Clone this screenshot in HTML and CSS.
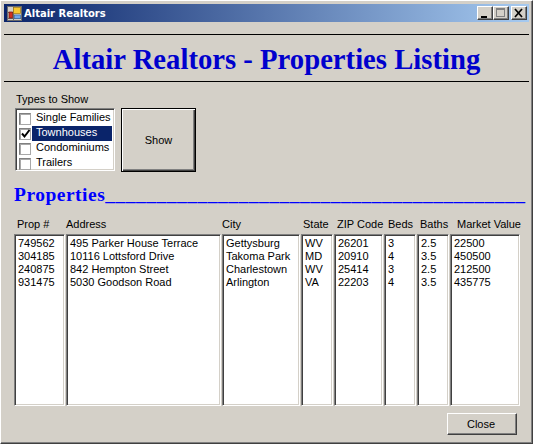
FILE: index.html
```html
<!DOCTYPE html>
<html lang="en">
<head>
<meta charset="utf-8">
<title>Altair Realtors</title>
<link rel="stylesheet" href="styles.css">
</head>
<body>
<div class="window">
  <div class="titlebar">
    <svg class="app-icon" width="15" height="15" viewBox="0 0 15 15">
      <rect x="0.5" y="0.5" width="14" height="14" fill="#d4d0c8" stroke="#6b6b6b"/>
      <path d="M1 6.5H6M6.5 1V14M1 12.5H14" stroke="#6b6b6b" fill="none"/>
      <rect x="6.5" y="1.5" width="7" height="6" fill="#f8c830" stroke="#a07810" stroke-width="0.7"/>
      <rect x="2" y="6" width="3.5" height="6" fill="#d03020" stroke="#701810" stroke-width="0.7"/>
      <rect x="7.5" y="9" width="6" height="3.5" fill="#70a8e8" stroke="#3868a8" stroke-width="0.7"/>
    </svg>
    <span class="title-text">Altair Realtors</span>
    <div class="caption-buttons">
      <div class="cap-btn cap-min"><svg width="15" height="14" viewBox="0 0 15 14"><rect x="4" y="10" width="6" height="2" fill="#000"/></svg></div>
      <div class="cap-btn cap-max"><svg width="15" height="14" viewBox="0 0 15 14"><rect x="3.5" y="2.5" width="8" height="8" fill="none" stroke="#808080"/><rect x="3" y="2" width="9" height="2" fill="#808080"/></svg></div>
      <div class="cap-btn cap-close"><svg width="15" height="14" viewBox="0 0 15 14"><path d="M4 3l7 8M11 3l-7 8" stroke="#000" stroke-width="1.7" fill="none"/></svg></div>
    </div>
  </div>
  <div class="client">
    <div class="heading">Altair Realtors - Properties Listing</div>
    <div class="filter">
      <div class="types">
        <div class="types-label">Types to Show</div>
        <div class="checklist">
          <div class="check-item"><span class="box"></span><span class="item-text">Single Families</span></div>
          <div class="check-item"><span class="box"><svg width="10" height="10" viewBox="0 0 10 10"><path d="M1 4.5l2.5 3L8.5 1" fill="none" stroke="#000" stroke-width="2"/></svg></span><span class="item-text selected">Townhouses</span></div>
          <div class="check-item"><span class="box"></span><span class="item-text">Condominiums</span></div>
          <div class="check-item"><span class="box"></span><span class="item-text">Trailers</span></div>
        </div>
      </div>
      <div class="show-button">Show</div>
    </div>
    <div class="section-title">Properties_________________________________________</div>
    <div class="table">
      <div class="col-label lbl-prop">Prop #</div>
      <div class="col-label lbl-address">Address</div>
      <div class="col-label lbl-city">City</div>
      <div class="col-label lbl-state">State</div>
      <div class="col-label lbl-zip">ZIP Code</div>
      <div class="col-label lbl-beds">Beds</div>
      <div class="col-label lbl-baths">Baths</div>
      <div class="col-label lbl-value">Market Value</div>
      <div class="listbox"><div>749562</div><div>304185</div><div>240875</div><div>931475</div></div>
      <div class="listbox"><div>495 Parker House Terrace</div><div>10116 Lottsford Drive</div><div>842 Hempton Street</div><div>5030 Goodson Road</div></div>
      <div class="listbox"><div>Gettysburg</div><div>Takoma Park</div><div>Charlestown</div><div>Arlington</div></div>
      <div class="listbox"><div>WV</div><div>MD</div><div>WV</div><div>VA</div></div>
      <div class="listbox"><div>26201</div><div>20910</div><div>25414</div><div>22203</div></div>
      <div class="listbox"><div>3</div><div>4</div><div>3</div><div>4</div></div>
      <div class="listbox"><div>2.5</div><div>3.5</div><div>2.5</div><div>3.5</div></div>
      <div class="listbox"><div>22500</div><div>450500</div><div>212500</div><div>435775</div></div>
    </div>
    <div class="footer"><div class="close-button">Close</div></div>
  </div>
</div>
</body>
</html>
```
FILE: styles.css
```css
* { box-sizing: border-box; }
html, body { margin: 0; padding: 0; }
body {
  width: 533px;
  height: 444px;
  overflow: hidden;
  background: #d4d0c8;
  font-family: "Liberation Sans", Arial, sans-serif;
  font-size: 11px;
  color: #000;
}
.window {
  width: 533px;
  height: 444px;
  padding: 3px;
  background: #d4d0c8;
  border-style: solid;
  border-width: 1px;
  border-color: #ffffff #404040 #404040 #ffffff;
  box-shadow: inset -1px -1px 0 #808080;
  display: flex;
  flex-direction: column;
}
.titlebar {
  height: 18px;
  flex: none;
  display: flex;
  align-items: center;
  padding-left: 3px;
  background: linear-gradient(to right, #0a246a, #a6caf0);
}
.app-icon { flex: none; margin-right: 2px; margin-top: 1px; }
.title-text {
  color: #fff;
  font-family: "DejaVu Sans", Verdana, sans-serif;
  font-weight: bold;
  font-size: 10px;
}
.caption-buttons {
  margin-left: auto;
  margin-right: 2px;
  display: flex;
}
.cap-btn {
  width: 16px;
  height: 14px;
  background: #d4d0c8;
  border-style: solid;
  border-width: 1px;
  border-color: #fff #404040 #404040 #fff;
  box-shadow: inset -1px -1px 0 #808080;
  overflow: hidden;
}
.cap-btn svg { display: block; margin: -1px 0 0 -1px; }
.cap-close { margin-left: 2px; }
.client {
  flex: 1;
  display: flex;
  flex-direction: column;
  padding: 12px 0 0 0;
}
.heading {
  height: 48px;
  border-top: 1px solid #000;
  border-bottom: 1px solid #000;
  color: #0000cd;
  font-family: "Liberation Serif", "Times New Roman", serif;
  font-weight: bold;
  font-size: 28.7px;
  line-height: 48px;
  text-align: center;
}
.filter {
  display: flex;
  align-items: flex-start;
  padding: 11px 0 0 11px;
}
.types-label { height: 15px; line-height: 13px; padding-left: 1px; white-space: nowrap; }
.checklist {
  width: 100px;
  height: 63px;
  background: #fff;
  padding: 2px;
  border-style: solid;
  border-width: 1px;
  border-color: #808080 #fff #fff #808080;
  box-shadow: inset 1px 1px 0 #404040, inset -1px -1px 0 #d4d0c8;
}
.check-item {
  height: 15px;
  display: flex;
  align-items: flex-start;
  padding-left: 1px;
}
.box {
  width: 12px;
  height: 12px;
  flex: none;
  margin: 2px 1px 0 0;
  background: #fff;
  border: 1px solid;
  border-color: #808080 #a8a8a8 #a8a8a8 #808080;
  box-shadow: inset 1px 1px 0 #a8a8a8;
  padding: 0 0 0 1px;
}
.box svg { display: block; }
.item-text {
  flex: 1;
  height: 15px;
  line-height: 13px;
  padding-left: 4px;
  white-space: nowrap;
}
.item-text.selected { background: #0a246a; color: #fff; }
.show-button {
  width: 75px;
  height: 64px;
  margin: 15px 0 0 6px;
  display: flex;
  align-items: center;
  justify-content: center;
  background: #d4d0c8;
  border: 1px solid #000;
  box-shadow: inset 1px 1px 0 #fff, inset -1px -1px 0 #404040, inset -2px -2px 0 #808080;
}
.section-title {
  margin: 11px 0 0 10px;
  height: 24px;
  white-space: nowrap;
  color: #0000ff;
  font-family: "Liberation Serif", "Times New Roman", serif;
  font-weight: bold;
  font-size: 19.5px;
  line-height: 24px;
  letter-spacing: 0.5px;
}
.table {
  display: grid;
  grid-template-columns: 51px 155px 78px 32px 49px 32px 32px 70px;
  grid-template-rows: 16px 172px;
  column-gap: 1px;
  margin: 11px 0 0 10px;
}
.col-label { line-height: 13px; white-space: nowrap; }
.lbl-prop { padding-left: 3px; }
.lbl-state { padding-left: 2px; }
.lbl-zip { padding-left: 3px; }
.lbl-beds { padding-left: 4px; }
.lbl-baths { padding-left: 3px; }
.lbl-value { padding-left: 7px; }
.listbox {
  background: #fff;
  padding: 2px 0 0 3px;
  line-height: 13px;
  white-space: nowrap;
  overflow: hidden;
  border-style: solid;
  border-width: 1px;
  border-color: #808080 #fff #fff #808080;
  box-shadow: inset 1px 1px 0 #404040, inset -1px -1px 0 #d4d0c8;
}
.footer {
  display: flex;
  justify-content: flex-end;
  padding: 7px 12px 0 0;
}
.close-button {
  width: 70px;
  height: 22px;
  padding-right: 2px;
  display: flex;
  align-items: center;
  justify-content: center;
  background: #d4d0c8;
  border: 1px solid;
  border-color: #fff #404040 #404040 #fff;
  box-shadow: inset -1px -1px 0 #808080;
}
```
